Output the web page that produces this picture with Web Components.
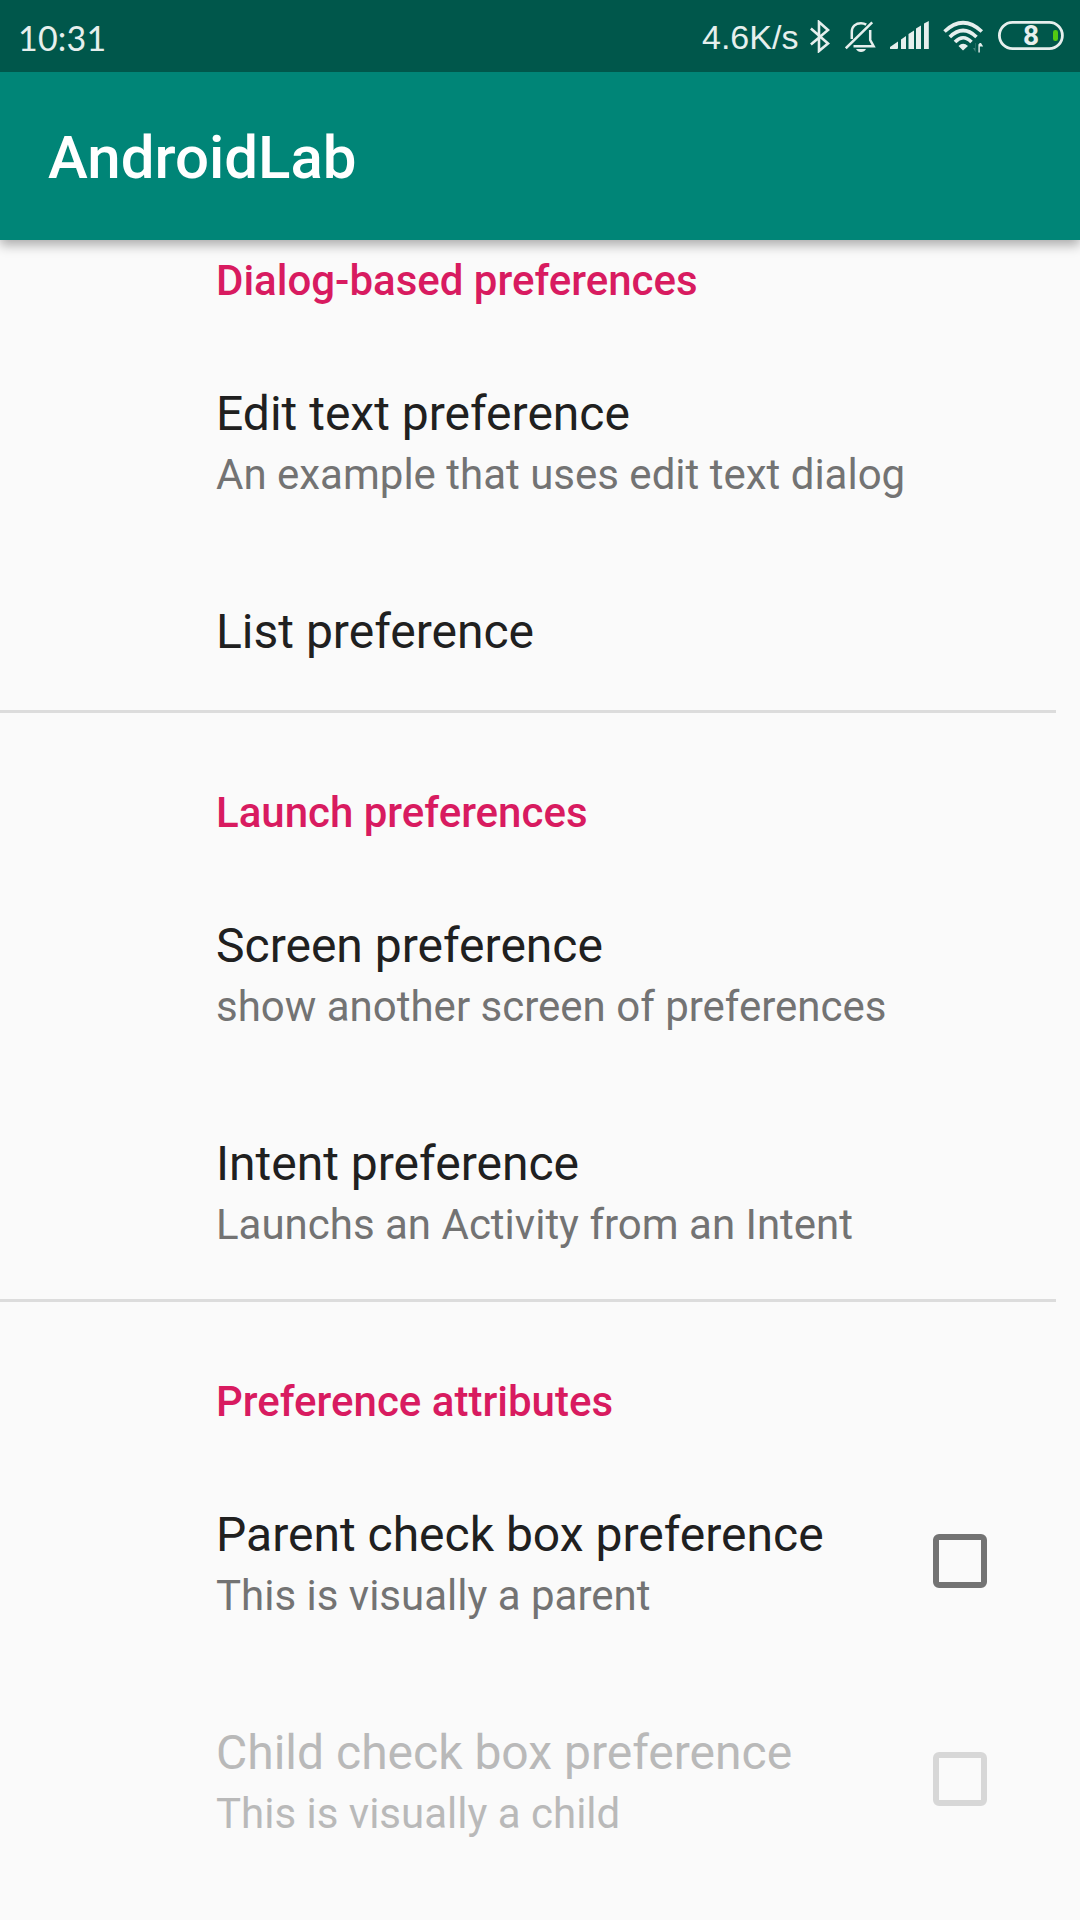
<!DOCTYPE html>
<html lang="en">
<head>
<meta charset="utf-8">
<title>AndroidLab</title>
<style>
html,body{margin:0;background:#fafafa}
body{width:1080px;height:1920px;overflow:hidden;font-family:Roboto,"Liberation Sans",sans-serif}
</style>
</head>
<body>
<lab-screen>
<status-bar slot="top"></status-bar>
<app-bar slot="top">AndroidLab</app-bar>
<pref-category heading="Dialog-based preferences" first>
<pref-item heading="Edit text preference" summary="An example that uses edit text dialog"></pref-item>
<pref-item heading="List preference"></pref-item>
</pref-category>
<pref-category heading="Launch preferences">
<pref-item heading="Screen preference" summary="show another screen of preferences"></pref-item>
<pref-item heading="Intent preference" summary="Launchs an Activity from an Intent"></pref-item>
</pref-category>
<pref-category heading="Preference attributes">
<pref-item heading="Parent check box preference" summary="This is visually a parent"><check-box slot="widget"></check-box></pref-item>
<pref-item heading="Child check box preference" summary="This is visually a child" disabled><check-box slot="widget" disabled></check-box></pref-item>
</pref-category>
</lab-screen>
<script>
const define = (name, render) => customElements.define(name, class extends HTMLElement {
  constructor() { super(); this.attachShadow({ mode: 'open' }); }
  connectedCallback() { this.shadowRoot.innerHTML = render(this); }
});

define('lab-screen', () => `
<style>
:host{display:flex;flex-direction:column;width:1080px;height:1920px;overflow:hidden;background:#fafafa}
header{display:flex;flex-direction:column;flex:none;position:relative;z-index:1;box-shadow:0 5px 11px rgba(0,0,0,.32)}
main{display:flex;flex-direction:column}
</style>
<header><slot name="top"></slot></header><main><slot></slot></main>`);

define('status-bar', () => `
<style>
:host{display:flex;box-sizing:border-box;height:72px;padding:0 16px 0 18px;background:#00574b;color:#e6efed;justify-content:space-between}
svg{display:block;flex:none;fill:currentColor}
.time{font:400 34px/40px Lato,sans-serif;padding-top:18px;letter-spacing:.2px}
.tray{display:flex;align-items:flex-start}
.speed{font:400 34px/40px "Liberation Sans",sans-serif;padding-top:17px;width:108px;white-space:nowrap}
.bt{margin:20px 15px 0 0}
.bell{margin:20px 14px 0 0}
.signal{margin:20px 14px 0 0}
.wifi{margin:20px 13px 0 0}
.battery{display:grid;margin-top:21px;width:66px;height:29px}
.battery>*{grid-area:1/1}
.battery span{font:700 28px/29px Roboto,sans-serif;text-align:center;-webkit-font-smoothing:antialiased}
</style>
<span class="time">10:31</span>
<div class="tray">
<span class="speed">4.6K/s</span>
<svg class="bt" width="20" height="33" viewBox="0 0 20 33" style="fill:none;stroke:currentColor;stroke-width:2.6"><path d="M.9 8.5 18 23.5 9 31V2l9 8L.9 24.5"/></svg>
<svg class="bell" width="31" height="33" viewBox="0 0 31 33"><g fill="none" stroke="currentColor" stroke-width="2.5"><path d="M.8 28.3 27.2 2.3M6.8 19V12C6.8 6 11 3.2 16 3.2Q19 3.2 21.2 4.6M25.2 10V20L28.6 26.2H8.5"/></g><path d="M11 29H21Q19.5 32 16 32T11 29"/></svg>
<svg class="signal" width="39" height="30" viewBox="0 0 39 30"><path d="M0 28.5V27L8 21.5V28Q8 29 7 29H1Q0 29 0 28.5M11 19.5 16 16V29H11ZM18.5 14 24 10.5V29H18.5ZM26 8.5 31 5.5V29H26ZM34 3.5 38.8 1V29H34Z"/></svg>
<svg class="wifi" width="42" height="34" viewBox="0 0 42 34"><g fill="none" stroke="currentColor" stroke-width="3.6"><path d="M1.5 11.5Q20 -6 38.8 11.5"/><path d="M6.8 17Q20 4 33.5 17"/><path d="M12 22Q20 13.5 28.5 22"/></g><path d="M15.5 26Q20 21.5 25 26L20 30.4Z"/><path d="M35.4 24.5 36.8 23V32.5H35.4ZM36.8 23H38L40.2 26.5H36.8Z"/><path opacity=".3" d="M32.5 23V32L30 28H32V23Z"/></svg>
<div class="battery">
<svg width="66" height="29" viewBox="0 0 66 29"><rect x="1.4" y="1.4" width="63" height="26.2" rx="13.1" fill="none" stroke="currentColor" stroke-width="2.8"/><rect x="55" y="9" width="5" height="11" rx="2.3" fill="#54c912"/></svg>
<span>8</span></div>
</div>`);

define('app-bar', () => `
<style>
:host{display:flex;align-items:center;box-sizing:border-box;height:168px;padding:4px 48px 0;background:#008577;color:#fff;font-size:60px;line-height:70px;font-weight:500}
</style><slot></slot>`);

define('pref-category', el => `
<style>
:host{display:flex;flex-direction:column}
:host(:not([first]))::before{content:"";height:3px;width:1056px;background:#dcdcdc}
h2{margin:0;padding:75px 0 26px 216px;font-size:42px;line-height:49px;font-weight:500;color:#d81b60}
:host([first]) h2{padding-top:16px}
</style><h2>${el.getAttribute('heading')}</h2><slot></slot>`);

define('pref-item', el => `
<style>
:host{display:flex;align-items:center;padding:0 93px 0 216px}
.text{flex:1;display:flex;flex-direction:column;gap:8px;padding:54px 0 50px;white-space:nowrap}
.title{font-size:48px;line-height:57px;color:#202020}
.summary{font-size:42px;line-height:49px;color:#737373}
:host([disabled]) .title,:host([disabled]) .summary{color:#b9b9b9}
</style><div class="text"><div class="title">${el.getAttribute('heading')}</div>${el.hasAttribute('summary') ? `<div class="summary">${el.getAttribute('summary')}</div>` : ''}</div><slot name="widget"></slot>`);

define('check-box', () => `
<style>
:host{display:block;flex:none;box-sizing:border-box;width:54px;height:54px;border:6px solid #737373;border-radius:6px}
:host([disabled]){border-color:#d7d7d7}
</style>`);
</script>
</body>
</html>
